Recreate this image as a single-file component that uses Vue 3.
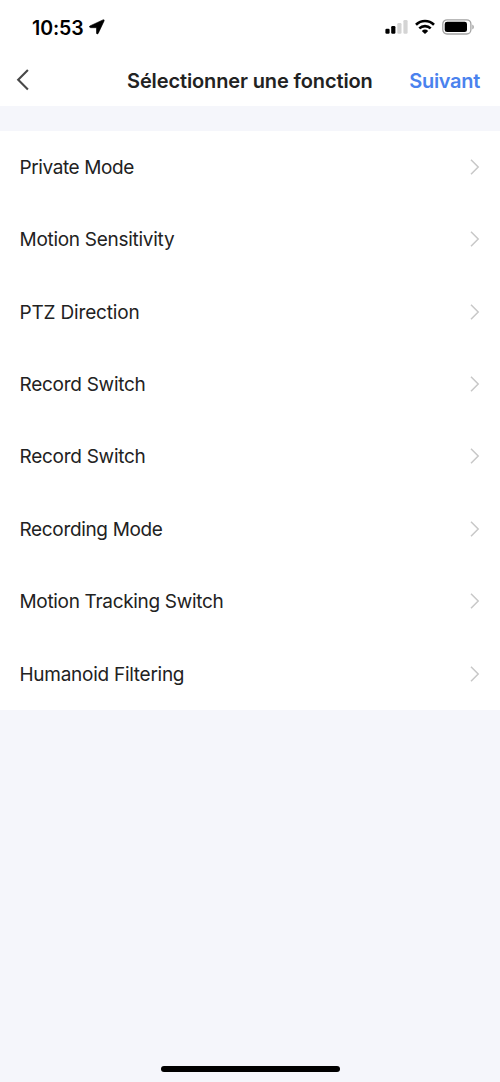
<script setup>
const functions = [
  { name: 'Private Mode', tracking: -0.4 },
  { name: 'Motion Sensitivity', tracking: -0.28 },
  { name: 'PTZ Direction', tracking: -0.17 },
  { name: 'Record Switch', tracking: -0.27 },
  { name: 'Record Switch', tracking: -0.27 },
  { name: 'Recording Mode', tracking: -0.34 },
  { name: 'Motion Tracking Switch', tracking: -0.32 },
  { name: 'Humanoid Filtering', tracking: -0.27 },
]
</script>

<template>
  <div class="screen">
    <header class="top">
      <div class="status">
        <span class="time">10:53</span>
        <svg class="location" width="16" height="16" viewBox="0 0 16 16">
          <path d="M.8 7 13.9.9Q15.6.3 15.1 1.9L9.2 14.4Q8.1 15.8 7.5 14.2V8.7H1.7Q-.2 8.3.8 7Z" stroke="#000" stroke-width=".6" />
        </svg>
        <svg class="signal" width="24" height="16" viewBox="0 0 24 16">
          <rect x=".4" y="9.8" width="4.2" height="5" rx="1.2" />
          <rect x="6.2" y="7" width="4.2" height="7.8" rx="1.2" />
          <rect class="weak" x="12.3" y="4" width="4.2" height="10.8" rx="1.2" />
          <rect class="weak" x="18.4" y="1" width="4.2" height="13.8" rx="1.2" />
        </svg>
        <svg class="wifi" width="20" height="16" viewBox="0 0 20 16">
          <g fill="none" stroke="#000" stroke-width="2.6">
            <path d="M1 5.7C6.1.7 13.9.7 19 5.7" />
            <path d="M4.3 9.4C7.5 6.3 12.5 6.3 15.7 9.4" />
          </g>
          <path d="M6.8 11.9Q10 9.3 13.2 11.9L10.6 14.6Q10 15.1 9.4 14.6Z" />
        </svg>
        <svg class="battery" width="33" height="16" viewBox="0 0 33 16">
          <rect x=".8" y=".8" width="28.1" height="14.2" rx="4.2" fill="none" stroke="#a3a3a3" stroke-width="1.3" />
          <rect x="2.7" y="2.7" width="22.3" height="10.4" rx="2.4" />
          <path d="M30.3 5.4Q31.9 6.1 31.9 7.9T30.3 10.4Z" fill="#a3a3a3" />
        </svg>
      </div>
      <nav class="nav">
        <svg class="back" width="14" height="24" viewBox="0 0 14 24">
          <path d="M11.9 2.1 2.2 11.8 11.9 21.5" fill="none" stroke="#484848" stroke-width="2.1" />
        </svg>
        <h1 class="title">Sélectionner une fonction</h1>
        <span class="next">Suivant</span>
      </nav>
    </header>
    <main class="list">
      <div v-for="(item, i) in functions" :key="i" class="row">
        <span class="label" :style="{ letterSpacing: item.tracking + 'px' }">{{ item.name }}</span>
        <svg width="12" height="18" viewBox="0 0 12 18">
          <path d="M2 1.8 9.2 9 2 16.2" fill="none" stroke="#c8c8c8" stroke-width="1.5" />
        </svg>
      </div>
    </main>
    <footer class="bottom"><div class="home"></div></footer>
  </div>
</template>

<style>
body {
  background: #f5f6fb;
}
</style>

<style scoped>
.screen {
  display: flex;
  flex-direction: column;
  box-sizing: border-box;
  width: 500px;
  height: 1082px;
  background: #f5f6fb;
  font-family: Inter, "Liberation Sans", sans-serif;
  color: #222;
}
.top {
  height: 106px;
  background: #fff;
}
.status {
  display: flex;
  align-items: center;
  height: 54px;
  padding: 0 25px 0 32px;
  box-sizing: border-box;
}
.time {
  width: 52px;
  padding-top: 1px;
  font-size: 19.5px;
  font-weight: 600;
  letter-spacing: -0.1px;
  color: #000;
  white-space: nowrap;
}
.location {
  margin-left: 5px;
}
.signal {
  margin-left: auto;
}
.weak {
  fill: #d4d4d4;
}
.wifi {
  margin-left: 6px;
}
.battery {
  margin-left: 7px;
}
.nav {
  display: grid;
  grid-template-columns: 111px minmax(0, 1fr) 110px;
  align-items: center;
  height: 52px;
  padding: 0 20px 0 16px;
}
.title {
  margin: 0;
  padding-top: 1px;
  font-size: 20px;
  font-weight: 600;
  letter-spacing: -0.12px;
  white-space: nowrap;
}
.next {
  justify-self: end;
  padding-top: 1px;
  font-size: 20px;
  font-weight: 600;
  letter-spacing: -0.3px;
  color: #4a82ee;
}
.list {
  margin-top: 24.5px;
  background: #fff;
}
.row {
  display: flex;
  align-items: center;
  justify-content: space-between;
  height: 72.45px;
  padding: 0 19px 0 19.5px;
}
.label {
  padding-top: 1px;
  font-size: 19px;
}
.bottom {
  display: flex;
  justify-content: center;
  margin-top: auto;
  padding-bottom: 10px;
}
.home {
  width: 179px;
  height: 6px;
  border-radius: 3px;
  background: #000;
}
</style>
